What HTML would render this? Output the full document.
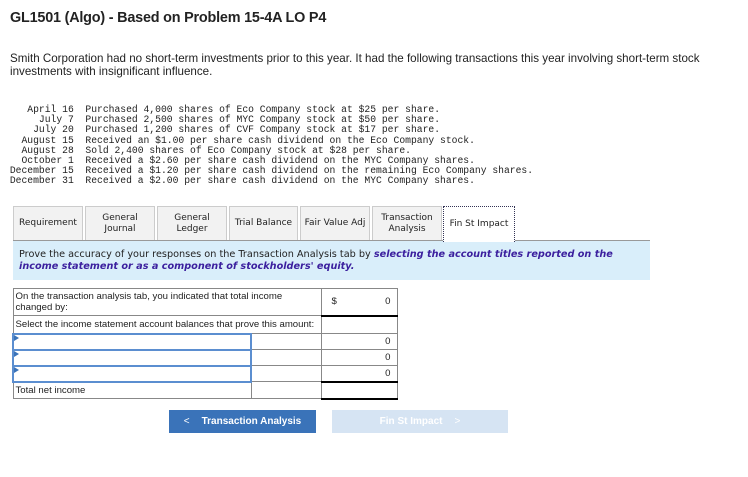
<!DOCTYPE html>
<html><head><meta charset="utf-8"><style>
body{margin:0;width:748px;height:477px;background:#fff;position:relative;font-family:"Liberation Sans",sans-serif;color:#222;overflow:hidden}
.a{position:absolute}
h1{position:absolute;left:10px;top:10px;margin:0;font-size:14.4px;font-weight:bold;letter-spacing:-0.2px}
.p{left:10px;top:52px;font-size:11.6px;line-height:13px;width:712px}
pre{position:absolute;left:4px;top:105px;margin:0;font-family:"Liberation Mono",monospace;font-size:9.7px;line-height:10.2px;color:#222}
.tab{position:absolute;top:206px;height:34px;background:#f2f2f2;border:1px solid #ccc;border-bottom:none;font-family:"DejaVu Sans",sans-serif;font-size:9px;display:flex;align-items:center;justify-content:center;text-align:center;line-height:11px;box-sizing:border-box}
.tabline{left:13px;top:240px;width:637px;height:1px;background:#999}
.info{left:13px;top:241px;width:637px;height:39px;background:#d9eefa;font-family:"DejaVu Sans",sans-serif;font-size:9.7px;line-height:12px;box-sizing:border-box;padding:8px 6px}
.info b{color:#3b1f9e;font-style:italic}
table{position:absolute;left:12px;top:288px;border-collapse:collapse;font-size:9.6px;table-layout:fixed;width:384px}
td{border:1px solid #888;padding:0 2px;height:16px;box-sizing:border-box}
.r{text-align:right;padding-right:6px}
.sel{border:2px solid #5b8ed0;height:14px;position:relative}
.sel:before{content:"";position:absolute;left:0;top:0;border-left:5px solid #3a73b9;border-top:3px solid transparent;border-bottom:3px solid transparent}
.btn{top:410px;height:23px;font-size:10px;font-weight:bold;color:#fff;display:flex;align-items:center;justify-content:center}
</style></head><body>
<h1>GL1501 (Algo) - Based on Problem 15-4A LO P4</h1>
<div class="a p">Smith Corporation had no short-term investments prior to this year. It had the following transactions this year involving short-term stock investments with insignificant influence.</div>
<pre>    April 16  Purchased 4,000 shares of Eco Company stock at $25 per share.
      July 7  Purchased 2,500 shares of MYC Company stock at $50 per share.
     July 20  Purchased 1,200 shares of CVF Company stock at $17 per share.
   August 15  Received an $1.00 per share cash dividend on the Eco Company stock.
   August 28  Sold 2,400 shares of Eco Company stock at $28 per share.
   October 1  Received a $2.60 per share cash dividend on the MYC Company shares.
 December 15  Received a $1.20 per share cash dividend on the remaining Eco Company shares.
 December 31  Received a $2.00 per share cash dividend on the MYC Company shares.</pre>
<div class="tab" style="left:13px;width:70px">Requirement</div>
<div class="tab" style="left:85px;width:70px">General<br>Journal</div>
<div class="tab" style="left:157px;width:70px">General<br>Ledger</div>
<div class="tab" style="left:229px;width:69px">Trial Balance</div>
<div class="tab" style="left:300px;width:70px">Fair Value Adj</div>
<div class="tab" style="left:372px;width:70px">Transaction<br>Analysis</div>
<div class="a tabline"></div>
<div class="tab" style="left:443px;width:72px;height:36px;background:#fff;border:1px dotted #335;border-bottom:none;z-index:2">Fin St Impact</div>
<div class="a info">Prove the accuracy of your responses on the Transaction Analysis tab by <b>selecting the account titles reported on the income statement or as a component of stockholders' equity.</b></div>
<table>
<colgroup><col style="width:238px"><col style="width:70px"><col style="width:76px"></colgroup>
<tr><td colspan="2" style="height:27px;line-height:11px">On the transaction analysis tab, you indicated that total income<br>changed by:</td><td style="border-bottom:2px solid #000;padding:0"><div style="display:flex;padding:0 6px 0 10px"><span style="width:20px">$</span><span style="flex:1;text-align:right">0</span></div></td></tr>
<tr><td colspan="2" style="height:18px">Select the income statement account balances that prove this amount:</td><td></td></tr>
<tr><td class="sel"></td><td></td><td class="r">0</td></tr>
<tr><td class="sel"></td><td></td><td class="r">0</td></tr>
<tr><td class="sel"></td><td></td><td class="r" style="border-bottom:2px solid #000">0</td></tr>
<tr><td style="height:17px">Total net income</td><td></td><td style="border-bottom:2px solid #000"></td></tr>
</table>
<div class="a btn" style="left:169px;width:147px;background:#3a73b9"><span style="margin-right:12px;font-weight:normal">&lt;</span>Transaction Analysis</div>
<div class="a btn" style="left:332px;width:176px;background:#d6e4f3">Fin St Impact<span style="margin-left:12px;font-weight:normal">&gt;</span></div>
</body></html>
